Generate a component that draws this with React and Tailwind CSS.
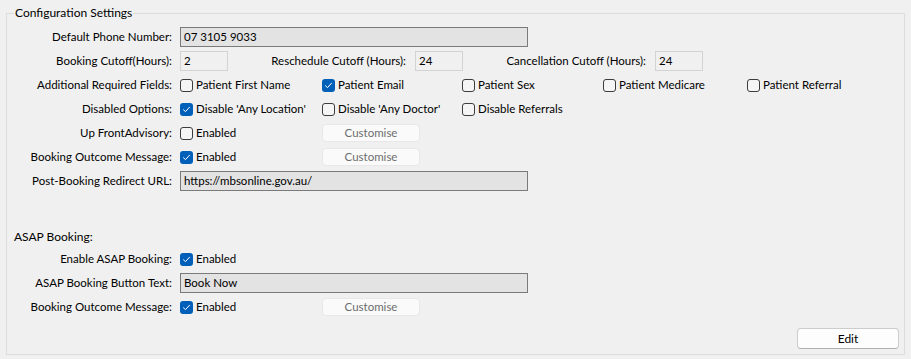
import React from 'react';

function Check({ checked, label, className = '' }) {
  return (
    <div className={`flex items-center ${className}`}>
      {checked ? (
        <span className="w-[13px] h-[13px] rounded-[3px] bg-[#005fb8] flex items-center justify-center shrink-0">
          <svg width="9" height="9" viewBox="0 0 9 9" fill="none">
            <path d="M1.5 4.8 L3.5 6.6 L7.5 2.2" stroke="#ffffff" strokeWidth="1" strokeLinecap="round" strokeLinejoin="round" />
          </svg>
        </span>
      ) : (
        <span className="w-[13px] h-[13px] rounded-[3px] border border-[#3c3c3c] bg-[#f5f5f5] shrink-0" />
      )}
      <span className="ml-[3px] whitespace-nowrap">{label}</span>
    </div>
  );
}

function Label({ children }) {
  return <div className="w-[165px] text-right whitespace-nowrap shrink-0">{children}</div>;
}

function Row({ label, children }) {
  return (
    <div className="h-[24px] flex items-center">
      <Label>{label}</Label>
      <div className="ml-[8px] flex items-center">{children}</div>
    </div>
  );
}

function WideBox({ value }) {
  return (
    <div className="w-[348px] h-[20px] border border-[#7a7a7a] bg-[#e3e3e3] flex items-center px-[3px] whitespace-nowrap">
      {value}
    </div>
  );
}

function SmallBox({ value }) {
  return (
    <div className="w-[48px] h-[20px] border border-[#d3d3d3] bg-[#f0f0f0] flex items-center px-[3px] shrink-0">
      {value}
    </div>
  );
}

function Customise() {
  return (
    <div className="w-[98px] h-[18px] rounded-[4px] border border-[#e8e8e8] bg-[#fafafa] text-[#6d6d6d] flex items-center justify-center">
      Customise
    </div>
  );
}

export default function App() {
  return (
    <div className="w-[911px] h-[359px] bg-[#f0f0f0] pl-[6px] pt-[5px] text-[11.5px] leading-[16px] text-black font-['Lato',sans-serif]">
      <fieldset className="w-[899px] h-[350px] border border-[#dcdcdc] flex flex-col">
        <legend className="ml-[7px] px-[1px] leading-[16px] text-[12px]">Configuration Settings</legend>

        <div className="pt-[4px]">
          <Row label="Default Phone Number:">
            <WideBox value="07 3105 9033" />
          </Row>

          <Row label="Booking Cutoff(Hours):">
            <SmallBox value="2" />
            <div className="w-[178px] text-right whitespace-nowrap">Reschedule Cutoff (Hours):</div>
            <div className="ml-[9px]"><SmallBox value="24" /></div>
            <div className="w-[183px] text-right whitespace-nowrap">Cancellation Cutoff (Hours):</div>
            <div className="ml-[9px]"><SmallBox value="24" /></div>
          </Row>

          <Row label="Additional Required Fields:">
            <Check label="Patient First Name" className="w-[142px]" />
            <Check label="Patient Email" checked className="w-[140px]" />
            <Check label="Patient Sex" className="w-[141px]" />
            <Check label="Patient Medicare" className="w-[144px]" />
            <Check label="Patient Referral" />
          </Row>

          <Row label="Disabled Options:">
            <Check label="Disable 'Any Location'" checked className="w-[142px]" />
            <Check label="Disable 'Any Doctor'" className="w-[140px]" />
            <Check label="Disable Referrals" />
          </Row>

          <Row label="Up FrontAdvisory:">
            <Check label="Enabled" className="w-[142px]" />
            <Customise />
          </Row>

          <Row label="Booking Outcome Message:">
            <Check label="Enabled" checked className="w-[142px]" />
            <Customise />
          </Row>

          <Row label="Post-Booking Redirect URL:">
            <WideBox value="https://mbsonline.gov.au/" />
          </Row>
        </div>

        <div className="mt-[34px] h-[20px] flex items-center pl-[7px] text-[12px]">ASAP Booking:</div>

        <div>
          <Row label="Enable ASAP Booking:">
            <Check label="Enabled" checked className="w-[142px]" />
          </Row>

          <Row label="ASAP Booking Button Text:">
            <WideBox value="Book Now" />
          </Row>

          <Row label="Booking Outcome Message:">
            <Check label="Enabled" checked className="w-[142px]" />
            <Customise />
          </Row>
        </div>

        <div className="mt-[9px] flex justify-end pr-[5px]">
          <button className="w-[102px] h-[21px] rounded-[4px] border border-[#cccccc] border-b-[#b0b0b0] bg-[#fdfdfd] text-black text-[12px] leading-[16px]">
            Edit
          </button>
        </div>
      </fieldset>
    </div>
  );
}
